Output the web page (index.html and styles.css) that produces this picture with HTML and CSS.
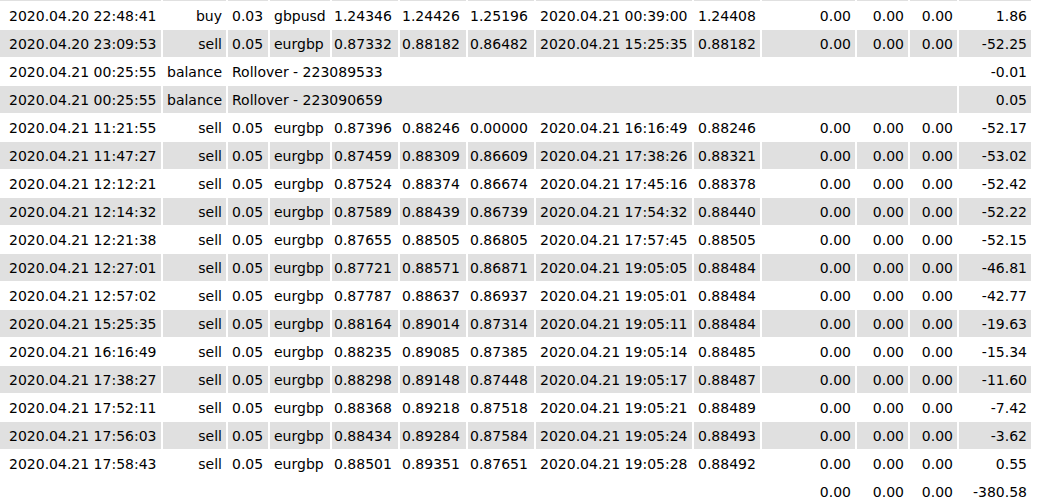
FILE: index.html
```html
<!DOCTYPE html>
<html>
<head>
<meta charset="utf-8">
<link rel="stylesheet" href="styles.css">
</head>
<body>
<table class="report">
<colgroup>
<col class="w-date"><col class="w-type"><col class="w-size"><col class="w-sym"><col class="w-price"><col class="w-price"><col class="w-price"><col class="w-ctime"><col class="w-price"><col class="w-comm"><col class="w-tax"><col class="w-swap"><col class="w-profit">
</colgroup>
<tbody>
<tr class="alt cut"><td></td><td></td><td></td><td></td><td></td><td></td><td></td><td></td><td></td><td></td><td></td><td></td><td></td></tr>
<tr><td class="dt">2020.04.20 22:48:41</td><td class="r">buy</td><td>0.03</td><td>gbpusd</td><td class="p">1.24346</td><td class="p">1.24426</td><td class="p">1.25196</td><td>2020.04.21 00:39:00</td><td>1.24408</td><td class="r">0.00</td><td class="r">0.00</td><td class="r">0.00</td><td class="r">1.86</td></tr>
<tr class="alt"><td class="dt">2020.04.20 23:09:53</td><td class="r">sell</td><td>0.05</td><td>eurgbp</td><td class="p">0.87332</td><td class="p">0.88182</td><td class="p">0.86482</td><td>2020.04.21 15:25:35</td><td>0.88182</td><td class="r">0.00</td><td class="r">0.00</td><td class="r">0.00</td><td class="r">-52.25</td></tr>
<tr><td class="dt">2020.04.21 00:25:55</td><td class="r">balance</td><td colspan="10">Rollover - 223089533</td><td class="r">-0.01</td></tr>
<tr class="alt"><td class="dt">2020.04.21 00:25:55</td><td class="r">balance</td><td colspan="10">Rollover - 223090659</td><td class="r">0.05</td></tr>
<tr><td class="dt">2020.04.21 11:21:55</td><td class="r">sell</td><td>0.05</td><td>eurgbp</td><td class="p">0.87396</td><td class="p">0.88246</td><td class="p">0.00000</td><td>2020.04.21 16:16:49</td><td>0.88246</td><td class="r">0.00</td><td class="r">0.00</td><td class="r">0.00</td><td class="r">-52.17</td></tr>
<tr class="alt"><td class="dt">2020.04.21 11:47:27</td><td class="r">sell</td><td>0.05</td><td>eurgbp</td><td class="p">0.87459</td><td class="p">0.88309</td><td class="p">0.86609</td><td>2020.04.21 17:38:26</td><td>0.88321</td><td class="r">0.00</td><td class="r">0.00</td><td class="r">0.00</td><td class="r">-53.02</td></tr>
<tr><td class="dt">2020.04.21 12:12:21</td><td class="r">sell</td><td>0.05</td><td>eurgbp</td><td class="p">0.87524</td><td class="p">0.88374</td><td class="p">0.86674</td><td>2020.04.21 17:45:16</td><td>0.88378</td><td class="r">0.00</td><td class="r">0.00</td><td class="r">0.00</td><td class="r">-52.42</td></tr>
<tr class="alt"><td class="dt">2020.04.21 12:14:32</td><td class="r">sell</td><td>0.05</td><td>eurgbp</td><td class="p">0.87589</td><td class="p">0.88439</td><td class="p">0.86739</td><td>2020.04.21 17:54:32</td><td>0.88440</td><td class="r">0.00</td><td class="r">0.00</td><td class="r">0.00</td><td class="r">-52.22</td></tr>
<tr><td class="dt">2020.04.21 12:21:38</td><td class="r">sell</td><td>0.05</td><td>eurgbp</td><td class="p">0.87655</td><td class="p">0.88505</td><td class="p">0.86805</td><td>2020.04.21 17:57:45</td><td>0.88505</td><td class="r">0.00</td><td class="r">0.00</td><td class="r">0.00</td><td class="r">-52.15</td></tr>
<tr class="alt"><td class="dt">2020.04.21 12:27:01</td><td class="r">sell</td><td>0.05</td><td>eurgbp</td><td class="p">0.87721</td><td class="p">0.88571</td><td class="p">0.86871</td><td>2020.04.21 19:05:05</td><td>0.88484</td><td class="r">0.00</td><td class="r">0.00</td><td class="r">0.00</td><td class="r">-46.81</td></tr>
<tr><td class="dt">2020.04.21 12:57:02</td><td class="r">sell</td><td>0.05</td><td>eurgbp</td><td class="p">0.87787</td><td class="p">0.88637</td><td class="p">0.86937</td><td>2020.04.21 19:05:01</td><td>0.88484</td><td class="r">0.00</td><td class="r">0.00</td><td class="r">0.00</td><td class="r">-42.77</td></tr>
<tr class="alt"><td class="dt">2020.04.21 15:25:35</td><td class="r">sell</td><td>0.05</td><td>eurgbp</td><td class="p">0.88164</td><td class="p">0.89014</td><td class="p">0.87314</td><td>2020.04.21 19:05:11</td><td>0.88484</td><td class="r">0.00</td><td class="r">0.00</td><td class="r">0.00</td><td class="r">-19.63</td></tr>
<tr><td class="dt">2020.04.21 16:16:49</td><td class="r">sell</td><td>0.05</td><td>eurgbp</td><td class="p">0.88235</td><td class="p">0.89085</td><td class="p">0.87385</td><td>2020.04.21 19:05:14</td><td>0.88485</td><td class="r">0.00</td><td class="r">0.00</td><td class="r">0.00</td><td class="r">-15.34</td></tr>
<tr class="alt"><td class="dt">2020.04.21 17:38:27</td><td class="r">sell</td><td>0.05</td><td>eurgbp</td><td class="p">0.88298</td><td class="p">0.89148</td><td class="p">0.87448</td><td>2020.04.21 19:05:17</td><td>0.88487</td><td class="r">0.00</td><td class="r">0.00</td><td class="r">0.00</td><td class="r">-11.60</td></tr>
<tr><td class="dt">2020.04.21 17:52:11</td><td class="r">sell</td><td>0.05</td><td>eurgbp</td><td class="p">0.88368</td><td class="p">0.89218</td><td class="p">0.87518</td><td>2020.04.21 19:05:21</td><td>0.88489</td><td class="r">0.00</td><td class="r">0.00</td><td class="r">0.00</td><td class="r">-7.42</td></tr>
<tr class="alt"><td class="dt">2020.04.21 17:56:03</td><td class="r">sell</td><td>0.05</td><td>eurgbp</td><td class="p">0.88434</td><td class="p">0.89284</td><td class="p">0.87584</td><td>2020.04.21 19:05:24</td><td>0.88493</td><td class="r">0.00</td><td class="r">0.00</td><td class="r">0.00</td><td class="r">-3.62</td></tr>
<tr><td class="dt">2020.04.21 17:58:43</td><td class="r">sell</td><td>0.05</td><td>eurgbp</td><td class="p">0.88501</td><td class="p">0.89351</td><td class="p">0.87651</td><td>2020.04.21 19:05:28</td><td>0.88492</td><td class="r">0.00</td><td class="r">0.00</td><td class="r">0.00</td><td class="r">0.55</td></tr>
<tr><td colspan="9"></td><td class="r">0.00</td><td class="r">0.00</td><td class="r">0.00</td><td class="r">-380.58</td></tr>
</tbody>
</table>
</body>
</html>
```

FILE: styles.css
```css
html, body {
  margin: 0;
  padding: 0;
  background: #ffffff;
  overflow: hidden;
}

.report {
  table-layout: fixed;
  width: 1035px;
  border-collapse: separate;
  border-spacing: 2px 1px;
  margin: -1px 0 0 -2px;
  font-family: "DejaVu Sans", "Liberation Sans", sans-serif;
  font-size: 14px;
  color: #000000;
}

.w-date { width: 161px; }
.w-type { width: 63px; }
.w-size { width: 40px; }
.w-sym { width: 60px; }
.w-price { width: 66px; }
.w-ctime { width: 156px; }
.w-comm { width: 93px; }
.w-tax { width: 51px; }
.w-swap { width: 47px; }
.w-profit { width: 72px; }

.report td {
  box-sizing: border-box;
  height: 27px;
  padding: 2px 4px 0 4px;
  white-space: nowrap;
  overflow: hidden;
  text-align: left;
  vertical-align: middle;
  line-height: 17px;
}

.report tr.alt td {
  background: #e0e0e0;
}

.report tr.cut td {
  height: 1px;
  line-height: 0;
  padding: 0;
}

.report td.dt {
  padding-left: 9px;
}

.report td.p {
  padding-left: 2px;
  padding-right: 2px;
}

.report td.r {
  text-align: right;
}
```
